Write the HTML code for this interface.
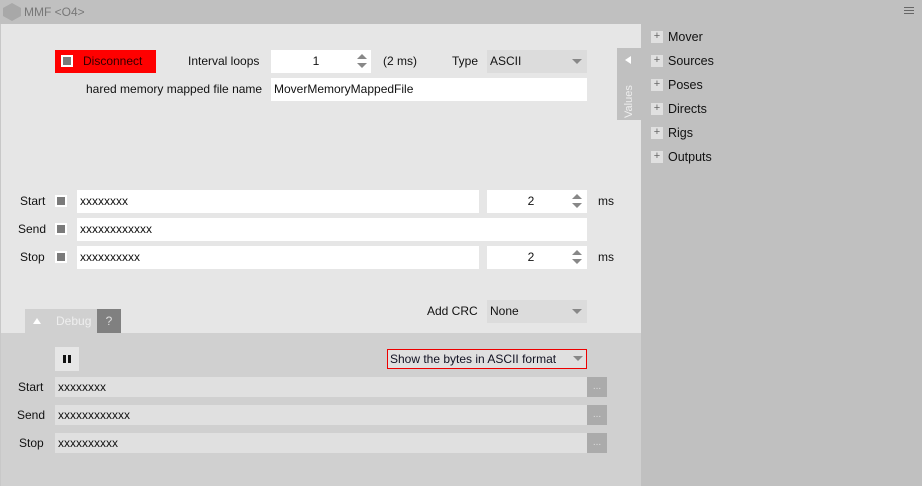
<!DOCTYPE html><html><head><style>
*{box-sizing:border-box;margin:0;padding:0}
body{width:922px;height:486px;overflow:hidden;background:#c0c0c0;font-family:"Liberation Sans",sans-serif;font-size:12px;color:#111;position:relative}
.a{position:absolute}
.in{position:absolute;background:#fff;height:23px;line-height:23px;padding-left:3px}
.lbl{position:absolute;line-height:23px}
.cb{position:absolute;width:12px;height:12px;background:#fff;}
.cb:after{content:"";position:absolute;left:2px;top:2px;width:8px;height:8px;background:#7a7a7a}
.tri{position:absolute;width:0;height:0;border-left:5px solid transparent;border-right:5px solid transparent;border-top:5px solid #888}
.sp{position:absolute;width:10px;height:18px}
.sp:before{content:"";position:absolute;left:0;top:2px;border-left:5px solid transparent;border-right:5px solid transparent;border-bottom:5px solid #888}
.sp:after{content:"";position:absolute;left:0;bottom:2px;border-left:5px solid transparent;border-right:5px solid transparent;border-top:5px solid #888}
.tree{position:absolute;left:651px;font-size:12.5px}
.pl{position:absolute;left:0;width:12px;height:12px;background:#e0e0e0;color:#666;font-size:11px;line-height:11px;text-align:center}
.dr{position:absolute;left:55px;width:532px;height:20px;background:#e0e0e0;line-height:20px;padding-left:3px}
.dots{position:absolute;left:587px;width:20px;height:20px;background:#ababab;color:#ddd;text-align:center;line-height:20px;font-size:10px}
</style></head><body>
<div class="a" style="left:3px;top:3px;width:18px;height:18px;background:#a8a8a8;clip-path:polygon(50% 0,100% 28%,100% 72%,50% 100%,0 72%,0 28%)"></div>
<div class="a" style="left:24px;top:5px;color:#777;font-size:12px">MMF &lt;O4&gt;</div>
<div class="a" style="left:904px;top:7px;width:10px;height:1px;background:#666;box-shadow:0 3px 0 #666,0 6px 0 #666"></div>
<div class="a" style="left:0;top:24px;width:641px;height:462px;background:#e6e6e6;border-left:1px solid #c8c8c8"></div>
<div class="a" style="left:55px;top:50px;width:101px;height:23px;background:#f00"></div>
<div class="cb" style="left:61px;top:55px"></div>
<div class="lbl" style="left:83px;top:50px;color:#300">Disconnect</div>
<div class="lbl" style="left:188px;top:50px">Interval loops</div>
<div class="in" style="left:271px;top:50px;width:100px;text-align:center;padding:0 10px 0 0">1</div>
<div class="sp" style="left:357px;top:52px"></div>
<div class="lbl" style="left:383px;top:50px">(2 ms)</div>
<div class="lbl" style="left:452px;top:50px">Type</div>
<div class="in" style="left:487px;top:50px;width:100px;background:#dcdcdc">ASCII</div>
<div class="tri" style="left:572px;top:59px"></div>
<div class="lbl" style="left:86px;top:78px">hared memory mapped file name</div>
<div class="in" style="left:271px;top:78px;width:316px">MoverMemoryMappedFile</div>
<div class="a" style="left:617px;top:48px;width:24px;height:72px;background:#c0c0c0"></div>
<div class="a" style="left:625px;top:56px;border-top:4px solid transparent;border-bottom:4px solid transparent;border-right:6px solid #fff"></div>
<div class="a" style="left:623px;top:118px;transform:rotate(-90deg);transform-origin:0 0;color:#eee;font-size:11px">Values</div>
<div class="lbl" style="left:20px;top:190px">Start</div><div class="cb" style="left:55px;top:195px"></div>
<div class="in" style="left:77px;top:190px;width:402px">xxxxxxxx</div>
<div class="in" style="left:487px;top:190px;width:100px;text-align:center;padding:0 12px 0 0">2</div><div class="sp" style="left:572px;top:192px"></div>
<div class="lbl" style="left:598px;top:190px">ms</div>
<div class="lbl" style="left:18px;top:218px">Send</div><div class="cb" style="left:55px;top:223px"></div>
<div class="in" style="left:77px;top:218px;width:510px">xxxxxxxxxxxx</div>
<div class="lbl" style="left:20px;top:246px">Stop</div><div class="cb" style="left:55px;top:251px"></div>
<div class="in" style="left:77px;top:246px;width:402px">xxxxxxxxxx</div>
<div class="in" style="left:487px;top:246px;width:100px;text-align:center;padding:0 12px 0 0">2</div><div class="sp" style="left:572px;top:248px"></div>
<div class="lbl" style="left:598px;top:246px">ms</div>
<div class="lbl" style="left:427px;top:300px">Add CRC</div>
<div class="in" style="left:487px;top:300px;width:100px;background:#dcdcdc">None</div>
<div class="tri" style="left:572px;top:309px"></div>
<div class="a" style="left:1px;top:333px;width:640px;height:153px;background:#d0d0d0"></div>
<div class="a" style="left:25px;top:309px;width:72px;height:24px;background:#d0d0d0"></div>
<div class="a" style="left:33px;top:318px;border-left:4px solid transparent;border-right:4px solid transparent;border-bottom:6px solid #fff"></div>
<div class="a" style="left:56px;top:314px;color:#eee">Debug</div>
<div class="a" style="left:97px;top:309px;width:24px;height:24px;background:#808080;color:#ddd;text-align:center;line-height:24px">?</div>
<div class="a" style="left:55px;top:347px;width:24px;height:24px;background:#e6e6e6"></div>
<div class="a" style="left:63px;top:355px;width:3px;height:8px;background:#111"></div>
<div class="a" style="left:68px;top:355px;width:3px;height:8px;background:#111"></div>
<div class="a" style="left:387px;top:349px;width:200px;height:20px;border:1px solid #e00;background:#e0e0e0;line-height:18px;padding-left:2px;color:#112">Show the bytes in ASCII format</div>
<div class="tri" style="left:573px;top:356px"></div>
<div class="a" style="left:18px;top:380px">Start</div><div class="dr" style="top:377px">xxxxxxxx</div><div class="dots" style="top:377px">...</div>
<div class="a" style="left:17px;top:408px">Send</div><div class="dr" style="top:405px">xxxxxxxxxxxx</div><div class="dots" style="top:405px">...</div>
<div class="a" style="left:19px;top:436px">Stop</div><div class="dr" style="top:433px">xxxxxxxxxx</div><div class="dots" style="top:433px">...</div>
<div class="tree" style="top:30px"><div class="pl" style="top:1px">+</div><span style="margin-left:17px">Mover</span></div>
<div class="tree" style="top:54px"><div class="pl" style="top:1px">+</div><span style="margin-left:17px">Sources</span></div>
<div class="tree" style="top:78px"><div class="pl" style="top:1px">+</div><span style="margin-left:17px">Poses</span></div>
<div class="tree" style="top:102px"><div class="pl" style="top:1px">+</div><span style="margin-left:17px">Directs</span></div>
<div class="tree" style="top:126px"><div class="pl" style="top:1px">+</div><span style="margin-left:17px">Rigs</span></div>
<div class="tree" style="top:150px"><div class="pl" style="top:1px">+</div><span style="margin-left:17px">Outputs</span></div>
</body></html>
